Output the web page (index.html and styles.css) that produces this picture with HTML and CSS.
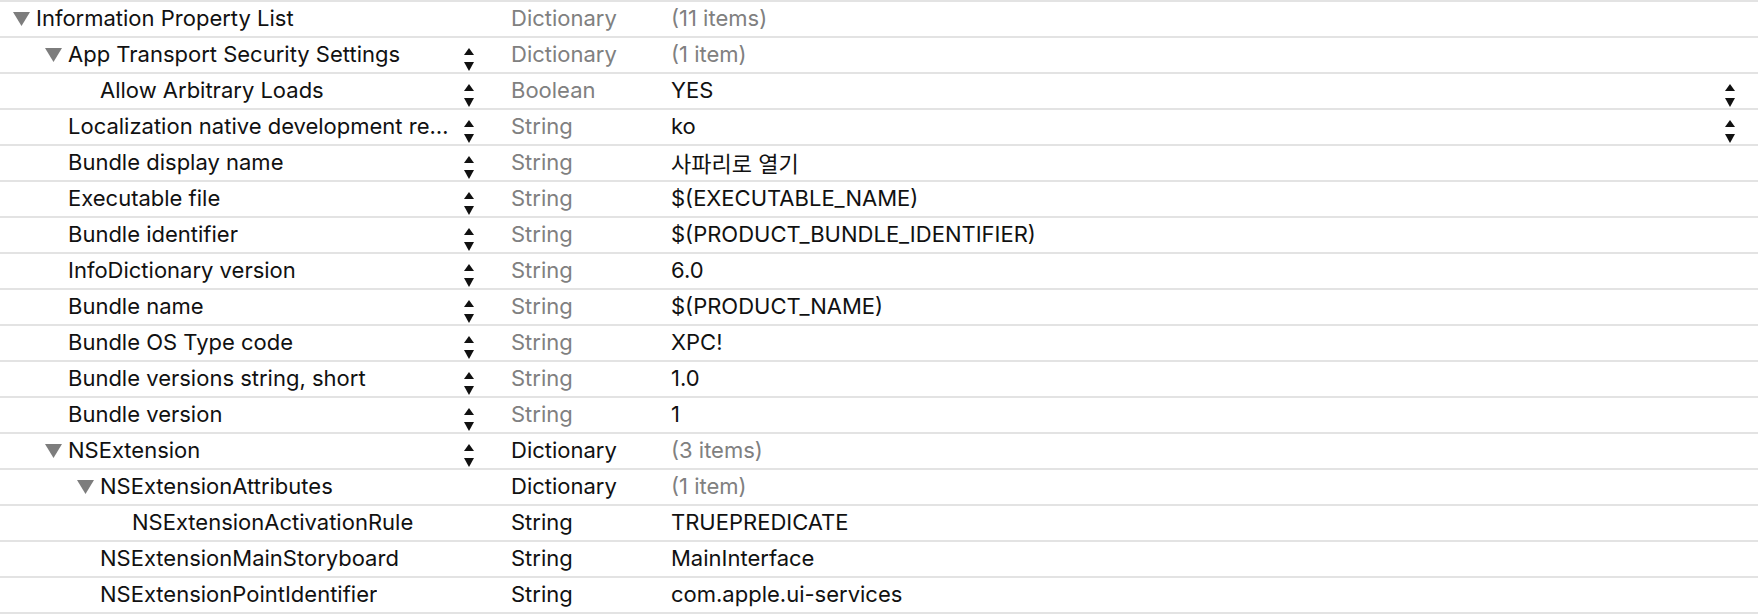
FILE: index.html
```html
<!DOCTYPE html>
<html lang="en">
<head>
<meta charset="utf-8">
<title>Info.plist</title>
<link rel="stylesheet" href="styles.css">
</head>
<body>
<div class="plist">
  <div class="row">
    <div class="key l0"><span class="disc"><svg width="17" height="14" viewBox="0 0 17 14"><polygon points="0,0 17,0 8.5,14"/></svg></span><span class="name">Information Property List</span></div>
    <div class="step"></div>
    <div class="type dim">Dictionary</div>
    <div class="val dim">(11 items)</div>
    <div class="rstep"></div>
  </div>
  <div class="row">
    <div class="key l1"><span class="disc"><svg width="17" height="14" viewBox="0 0 17 14"><polygon points="0,0 17,0 8.5,14"/></svg></span><span class="name">App Transport Security Settings</span></div>
    <div class="step"><svg class="arrows" width="10" height="23" viewBox="0 0 10 23"><polygon points="5,0 10,7 0,7"/><polygon points="0,14 10,14 5,23"/></svg></div>
    <div class="type dim">Dictionary</div>
    <div class="val dim">(1 item)</div>
    <div class="rstep"></div>
  </div>
  <div class="row">
    <div class="key l2"><span class="disc"></span><span class="name">Allow Arbitrary Loads</span></div>
    <div class="step"><svg class="arrows" width="10" height="23" viewBox="0 0 10 23"><polygon points="5,0 10,7 0,7"/><polygon points="0,14 10,14 5,23"/></svg></div>
    <div class="type dim">Boolean</div>
    <div class="val">YES</div>
    <div class="rstep"><svg class="arrows" width="10" height="23" viewBox="0 0 10 23"><polygon points="5,0 10,7 0,7"/><polygon points="0,14 10,14 5,23"/></svg></div>
  </div>
  <div class="row">
    <div class="key l1"><span class="disc"></span><span class="name">Localization native development region</span></div>
    <div class="step"><svg class="arrows" width="10" height="23" viewBox="0 0 10 23"><polygon points="5,0 10,7 0,7"/><polygon points="0,14 10,14 5,23"/></svg></div>
    <div class="type dim">String</div>
    <div class="val">ko</div>
    <div class="rstep"><svg class="arrows" width="10" height="23" viewBox="0 0 10 23"><polygon points="5,0 10,7 0,7"/><polygon points="0,14 10,14 5,23"/></svg></div>
  </div>
  <div class="row">
    <div class="key l1"><span class="disc"></span><span class="name">Bundle display name</span></div>
    <div class="step"><svg class="arrows" width="10" height="23" viewBox="0 0 10 23"><polygon points="5,0 10,7 0,7"/><polygon points="0,14 10,14 5,23"/></svg></div>
    <div class="type dim">String</div>
    <div class="val">사파리로 열기</div>
    <div class="rstep"></div>
  </div>
  <div class="row">
    <div class="key l1"><span class="disc"></span><span class="name">Executable file</span></div>
    <div class="step"><svg class="arrows" width="10" height="23" viewBox="0 0 10 23"><polygon points="5,0 10,7 0,7"/><polygon points="0,14 10,14 5,23"/></svg></div>
    <div class="type dim">String</div>
    <div class="val">$(EXECUTABLE_NAME)</div>
    <div class="rstep"></div>
  </div>
  <div class="row">
    <div class="key l1"><span class="disc"></span><span class="name">Bundle identifier</span></div>
    <div class="step"><svg class="arrows" width="10" height="23" viewBox="0 0 10 23"><polygon points="5,0 10,7 0,7"/><polygon points="0,14 10,14 5,23"/></svg></div>
    <div class="type dim">String</div>
    <div class="val">$(PRODUCT_BUNDLE_IDENTIFIER)</div>
    <div class="rstep"></div>
  </div>
  <div class="row">
    <div class="key l1"><span class="disc"></span><span class="name">InfoDictionary version</span></div>
    <div class="step"><svg class="arrows" width="10" height="23" viewBox="0 0 10 23"><polygon points="5,0 10,7 0,7"/><polygon points="0,14 10,14 5,23"/></svg></div>
    <div class="type dim">String</div>
    <div class="val">6.0</div>
    <div class="rstep"></div>
  </div>
  <div class="row">
    <div class="key l1"><span class="disc"></span><span class="name">Bundle name</span></div>
    <div class="step"><svg class="arrows" width="10" height="23" viewBox="0 0 10 23"><polygon points="5,0 10,7 0,7"/><polygon points="0,14 10,14 5,23"/></svg></div>
    <div class="type dim">String</div>
    <div class="val">$(PRODUCT_NAME)</div>
    <div class="rstep"></div>
  </div>
  <div class="row">
    <div class="key l1"><span class="disc"></span><span class="name">Bundle OS Type code</span></div>
    <div class="step"><svg class="arrows" width="10" height="23" viewBox="0 0 10 23"><polygon points="5,0 10,7 0,7"/><polygon points="0,14 10,14 5,23"/></svg></div>
    <div class="type dim">String</div>
    <div class="val">XPC!</div>
    <div class="rstep"></div>
  </div>
  <div class="row">
    <div class="key l1"><span class="disc"></span><span class="name">Bundle versions string, short</span></div>
    <div class="step"><svg class="arrows" width="10" height="23" viewBox="0 0 10 23"><polygon points="5,0 10,7 0,7"/><polygon points="0,14 10,14 5,23"/></svg></div>
    <div class="type dim">String</div>
    <div class="val">1.0</div>
    <div class="rstep"></div>
  </div>
  <div class="row">
    <div class="key l1"><span class="disc"></span><span class="name">Bundle version</span></div>
    <div class="step"><svg class="arrows" width="10" height="23" viewBox="0 0 10 23"><polygon points="5,0 10,7 0,7"/><polygon points="0,14 10,14 5,23"/></svg></div>
    <div class="type dim">String</div>
    <div class="val">1</div>
    <div class="rstep"></div>
  </div>
  <div class="row">
    <div class="key l1"><span class="disc"><svg width="17" height="14" viewBox="0 0 17 14"><polygon points="0,0 17,0 8.5,14"/></svg></span><span class="name">NSExtension</span></div>
    <div class="step"><svg class="arrows" width="10" height="23" viewBox="0 0 10 23"><polygon points="5,0 10,7 0,7"/><polygon points="0,14 10,14 5,23"/></svg></div>
    <div class="type">Dictionary</div>
    <div class="val dim">(3 items)</div>
    <div class="rstep"></div>
  </div>
  <div class="row">
    <div class="key l2"><span class="disc"><svg width="17" height="14" viewBox="0 0 17 14"><polygon points="0,0 17,0 8.5,14"/></svg></span><span class="name">NSExtensionAttributes</span></div>
    <div class="step"></div>
    <div class="type">Dictionary</div>
    <div class="val dim">(1 item)</div>
    <div class="rstep"></div>
  </div>
  <div class="row">
    <div class="key l3"><span class="disc"></span><span class="name">NSExtensionActivationRule</span></div>
    <div class="step"></div>
    <div class="type">String</div>
    <div class="val">TRUEPREDICATE</div>
    <div class="rstep"></div>
  </div>
  <div class="row">
    <div class="key l2"><span class="disc"></span><span class="name">NSExtensionMainStoryboard</span></div>
    <div class="step"></div>
    <div class="type">String</div>
    <div class="val">MainInterface</div>
    <div class="rstep"></div>
  </div>
  <div class="row">
    <div class="key l2"><span class="disc"></span><span class="name">NSExtensionPointIdentifier</span></div>
    <div class="step"></div>
    <div class="type">String</div>
    <div class="val">com.apple.ui-services</div>
    <div class="rstep"></div>
  </div>
</div>
</body>
</html>
```
FILE: styles.css
```css
html, body {
  margin: 0;
  padding: 0;
  background: #ffffff;
}
body {
  font-family: "Inter", "Noto Sans CJK KR", sans-serif;
  font-size: 22px;
  color: #111111;
}
.plist {
  border-top: 2px solid #e3e3e3;
}
.row {
  display: grid;
  grid-template-columns: 460px 51px 160px 1fr 38px;
  height: 36px;
  box-sizing: border-box;
  padding-bottom: 2px;
  border-bottom: 2px solid #e3e3e3;
  align-items: center;
}
.key {
  display: flex;
  align-items: center;
  min-width: 0;
  padding-right: 8px;
  box-sizing: border-box;
}
.l0 { padding-left: 13px; }
.l1 { padding-left: 45px; }
.l2 { padding-left: 77px; }
.l3 { padding-left: 109px; }
.disc {
  flex: 0 0 17px;
  width: 17px;
  height: 14px;
  margin-right: 6px;
  margin-top: 2px;
  display: flex;
}
.disc svg { fill: #7d7d7d; display: block; }
.name {
  white-space: nowrap;
  overflow: hidden;
  text-overflow: ellipsis;
  min-width: 0;
}
.step, .rstep {
  align-self: start;
  height: 32px;
  display: flex;
  align-items: flex-start;
}
.step { padding-left: 4px; }
.rstep { padding-left: 5px; }
.arrows {
  display: block;
  margin-top: 10px;
  fill: #111111;
}
.type, .val {
  white-space: nowrap;
  overflow: hidden;
}
.dim { color: #808080; }
```
